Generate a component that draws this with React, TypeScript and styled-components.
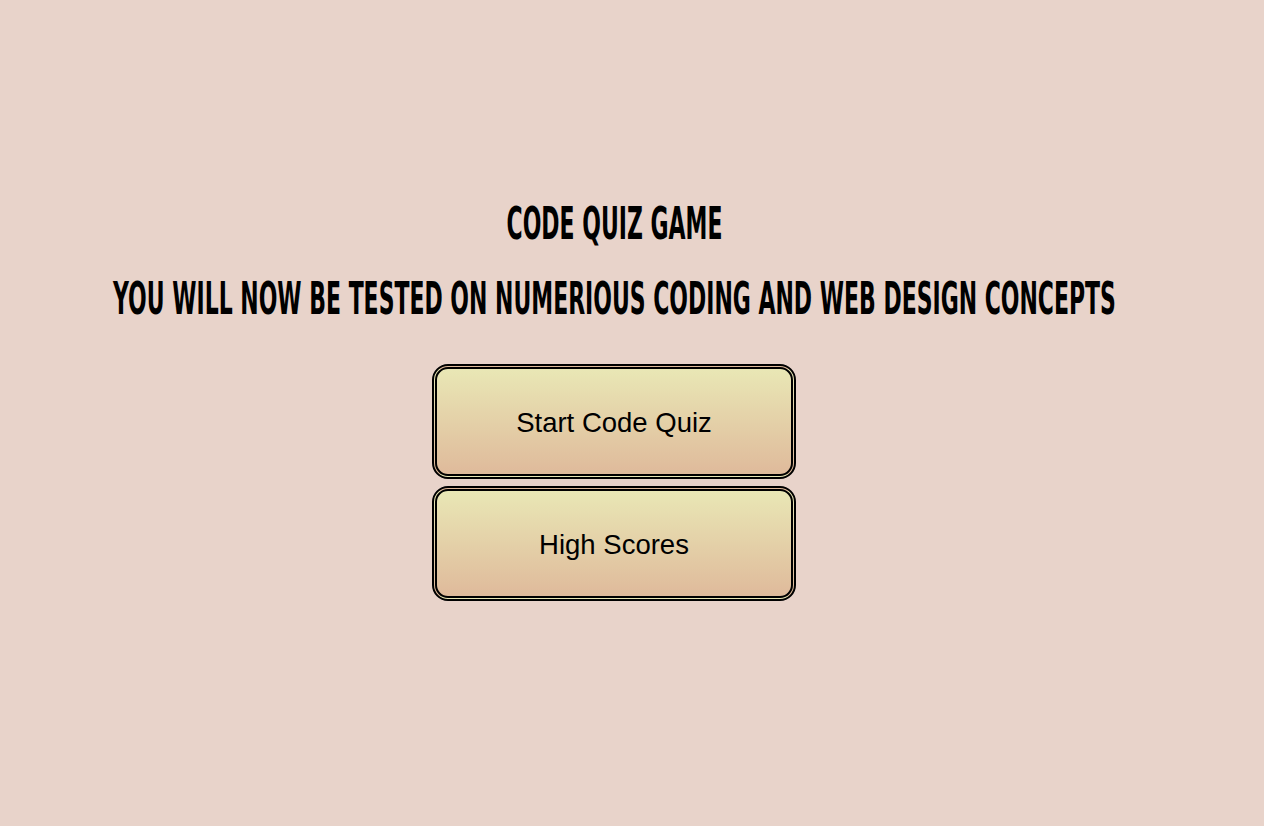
import React from "react";
import styled, { createGlobalStyle } from "styled-components";

const GlobalStyle = createGlobalStyle`
  html, body {
    margin: 0;
    padding: 0;
    background-color: #e8d3ca;
  }
  body {
    font-family: "Liberation Sans", Arial, sans-serif;
  }
`;

const Page = styled.main`
  min-height: 826px;
  display: flex;
  flex-direction: column;
  align-items: center;
  padding: 202px 36px 0 0;
  box-sizing: border-box;
`;

const Title = styled.h1<{ $gap: number }>`
  margin: 0 0 ${(p) => p.$gap}px 0;
  font-family: "DejaVu Sans", "Liberation Sans", sans-serif;
  font-stretch: condensed;
  font-weight: bold;
  font-size: 44px;
  line-height: 44px;
  text-transform: uppercase;
  color: #000;
  white-space: nowrap;
  display: inline-block;
  transform: scaleX(0.555);
`;

const ButtonStack = styled.div`
  display: flex;
  flex-direction: column;
  gap: 7px;
`;

const QuizButton = styled.button`
  width: 364px;
  height: 115px;
  box-sizing: border-box;
  padding: 2px 0 0;
  border: 5px double #000;
  border-radius: 16px;
  background: linear-gradient(to bottom, #e9e7b5, #dfba9b);
  font-family: "Liberation Sans", Arial, sans-serif;
  font-size: 27.5px;
  color: #000;
  cursor: pointer;
`;

export default function App() {
  return (
    <>
      <GlobalStyle />
      <Page>
        <Title $gap={31}>Code Quiz Game</Title>
        <Title as="h2" $gap={43}>
          You will now be tested on numerious coding and web design concepts
        </Title>
        <ButtonStack>
          <QuizButton>Start Code Quiz</QuizButton>
          <QuizButton>High Scores</QuizButton>
        </ButtonStack>
      </Page>
    </>
  );
}
